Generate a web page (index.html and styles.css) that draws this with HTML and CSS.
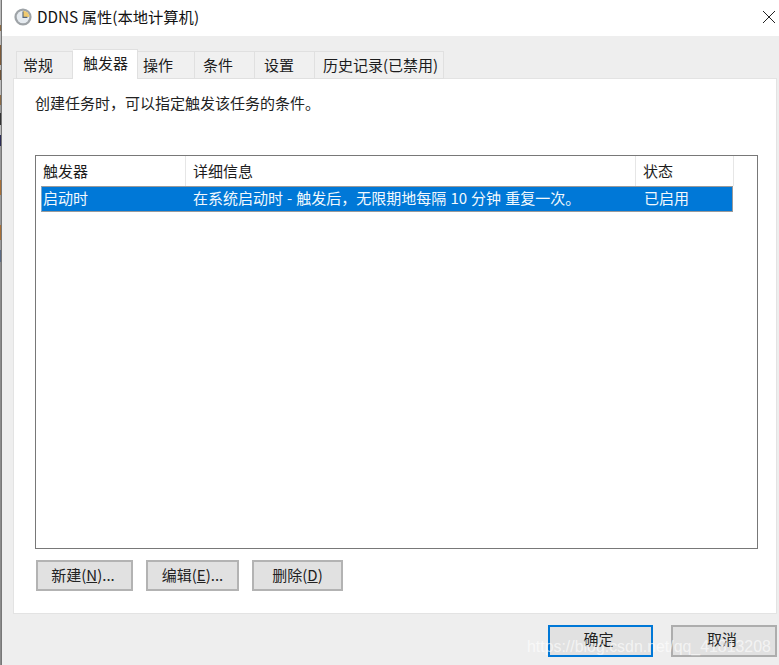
FILE: index.html
```html
<!DOCTYPE html>
<html>
<head>
  <meta charset="UTF-8">
  <meta name="viewport" content="width=device-width, initial-scale=1.0">
  <title>DDNS 属性(本地计算机)</title>
  <link rel="stylesheet" href="styles.css">
</head>
<body>
<div class="window">
  <div class="titlebar">
    <svg class="clock" width="18" height="18" viewBox="0 0 18 18">
      <circle cx="9" cy="9" r="8.6" fill="#9ea3a7"/>
      <circle cx="9" cy="9" r="6.3" fill="#e6ebf0"/>
      <path d="M9 9V2.7A6.3 6.3 0 0 1 15.3 9Z" fill="#efc96f"/>
      <path d="M9 3.6V9.4H13.4" fill="none" stroke="#56667a" stroke-width="1.1"/>
    </svg>
    <span class="title">DDNS 属性(本地计算机)</span>
    <svg class="close" width="12" height="12" viewBox="0 0 12 12">
      <path d="M0 0L12 12M12 0L0 12" stroke="#222" stroke-width="1" fill="none"/>
    </svg>
  </div>

  <div class="content">
    <div class="tabs">
      <div class="tab tab-first">常规</div>
      <div class="tab tab-active">触发器</div>
      <div class="tab tab-3">操作</div>
      <div class="tab tab-4">条件</div>
      <div class="tab tab-5">设置</div>
      <div class="tab tab-6">历史记录(已禁用)</div>
    </div>

    <div class="panel">
      <p class="desc">创建任务时，可以指定触发该任务的条件。</p>

      <div class="list">
        <div class="list-head">
          <div class="cell">触发器</div>
          <div class="cell">详细信息</div>
          <div class="cell">状态</div>
        </div>
        <div class="list-row">
          <div>启动时</div>
          <div>在系统启动时 - 触发后，无限期地每隔 10 分钟 重复一次。</div>
          <div>已启用</div>
        </div>
      </div>

      <div class="panel-buttons">
        <button class="btn btn-new">新建(<u>N</u>)...</button>
        <button class="btn btn-edit">编辑(<u>E</u>)...</button>
        <button class="btn btn-del">删除(<u>D</u>)</button>
      </div>
    </div>

    <div class="footer">
      <button class="btn btn-ok">确定</button>
      <button class="btn btn-cancel">取消</button>
    </div>
  </div>
</div>
<div class="watermark">https://blog.csdn.net/qq_41813208</div>
</body>
</html>
```

FILE: styles.css
```css
html, body {
  margin: 0;
  padding: 0;
  overflow: hidden;
}

/* the 1px column left of the window is whatever was behind it */
body {
  width: 779px;
  height: 665px;
  position: relative;
  background-color: #f0f0f0;
  background-image: linear-gradient(to bottom,
    #bbb 0 25px, #8a6a45 25px 31px, #bbb 31px 45px, #7d5a38 45px 65px,
    #bbb 65px 70px, #6f5236 70px 80px, #bbb 80px 95px, #8a6a45 95px 105px,
    #999 105px 113px, #333 113px 125px, #bbb 125px 135px, #2c2c55 135px 146px,
    #999 146px 180px, #a86f35 180px 195px, #999 195px 225px, #a86f35 225px 240px,
    #999 240px 250px, #5a6b85 250px 262px, #8b8b8b 262px);
  background-size: 1px 100%;
  background-repeat: no-repeat;
  font-family: "Noto Sans CJK SC", "Liberation Sans", sans-serif;
  font-size: 15px;
  color: #1c1c1c;
}

.window {
  height: 665px;
  display: flex;
  flex-direction: column;
  border-left: 1px solid #777;
  margin-left: 1px;
}

.titlebar {
  height: 36px;
  box-sizing: border-box;
  flex: none;
  display: flex;
  align-items: center;
  padding: 0 4px 2px 12px;
  background-color: #fff;
}

.clock {
  margin-right: 5px;
}

.title {
  flex: 1;
  margin-top: -2px;
  font-size: 15.3px;
  color: #111;
}

.content {
  flex: 1;
  display: flex;
  flex-direction: column;
  background-color: #eee;
  padding-left: 11px;
}

.tabs {
  display: flex;
  align-items: flex-end;
  height: 43px;
  padding-left: 3px;
  margin-bottom: -1px;
  position: relative;
}

.tab {
  height: 28px;
  line-height: 25px;
  box-sizing: border-box;
  border: 1px solid #e0e0e0;
  border-left: 0;
  background-color: #f0f0f0;
}

.tab-first {
  width: 57px;
  padding-left: 6px;
  border-left: 1px solid #e0e0e0;
}

.tab-active {
  width: 65px;
  height: 30px;
  line-height: 25px;
  padding-left: 10px;
  background-color: #fff;
  border-bottom: 0;
}

.tab-3 { width: 57px; padding-left: 5px; }
.tab-4 { width: 60px; padding-left: 8px; }
.tab-5 { width: 60px; padding-left: 9px; }
.tab-6 { width: 129px; padding-left: 8px; }

.panel {
  width: 764px;
  height: 536px;
  box-sizing: border-box;
  background-color: #fff;
  border: 1px solid #e3e3e3;
  padding: 0 0 0 21px;
  display: flex;
  flex-direction: column;
}

.desc {
  margin: 13px 0 0 0;
  height: 63px;
  line-height: 22px;
  color: #222;
}

.list {
  width: 723px;
  height: 394px;
  box-sizing: border-box;
  border: 1px solid #787878;
  flex: none;
}

.list-head {
  display: grid;
  grid-template-columns: 150px 450px 98px;
  height: 30px;
  line-height: 29px;
}

.cell {
  padding-left: 7px;
  border-right: 1px solid #e6e6e6;
}

.list-row {
  display: grid;
  grid-template-columns: 150px 451px 90px;
  height: 26px;
  box-sizing: border-box;
  margin-left: 5px;
  width: 692px;
  line-height: 22px;
  padding-left: 1px;
  background-color: #0078d7;
  border: 1px solid #9a9a9a;
  border-left-color: #7fa9cc;
  color: #f2f8fd;
  word-spacing: 0.7px;
}

.panel-buttons {
  display: flex;
  margin-top: 11px;
  margin-left: 1px;
}

.btn {
  height: 31px;
  box-sizing: border-box;
  padding: 0 0 2px 0;
  border: 2px solid #b3b3b3;
  background-color: #e1e1e1;
  font-family: inherit;
  font-size: 15px;
  color: #222;
}

.btn-new { width: 97px; margin-right: 13px; padding-right: 3px; }
.btn-edit { width: 93px; margin-right: 13px; }
.btn-del { width: 91px; }

.footer {
  display: flex;
  justify-content: flex-end;
  padding: 11px 2px 0 0;
}

.btn-ok {
  width: 105px;
  height: 32px;
  margin-right: 18px;
  padding: 0 4px 5px 0;
  border-color: #0078d7;
}

.btn-cancel {
  width: 106px;
  height: 32px;
  padding: 0 4px 5px 0;
  border-color: #adadad;
}

.watermark {
  position: absolute;
  left: 527px;
  top: 638px;
  font-family: "Liberation Sans", sans-serif;
  font-size: 15.9px;
  color: rgba(255, 255, 255, 0.62);
  white-space: nowrap;
}
```
